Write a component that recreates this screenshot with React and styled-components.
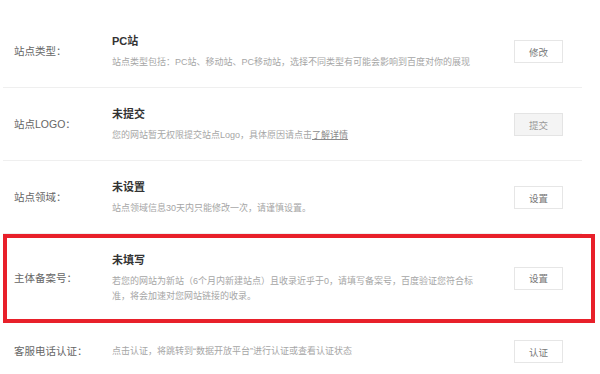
import React from "react";
import styled, { createGlobalStyle } from "styled-components";

const Global = createGlobalStyle`
  html, body { margin: 0; padding: 0; background: #fff; }
  body { font-family: "Liberation Sans", "Noto Sans CJK SC", sans-serif; }
`;

const Page = styled.div`
  width: 600px;
  height: 374px;
  overflow: hidden;
  padding: 15px 0 0 3px;
  box-sizing: border-box;
`;

const List = styled.div`
  width: 579px;
  display: flex;
  flex-direction: column;
`;

const Row = styled.div`
  position: relative;
  display: flex;
  align-items: center;
  padding: 18px 19px 17px 11px;
  border-bottom: ${(p) => (p.$last ? "none" : "1px solid #efefef")};
  ${(p) =>
    p.$highlight &&
    `
    &::after {
      content: "";
      position: absolute;
      left: 0;
      top: 0;
      right: -13px;
      bottom: -2px;
      border: 4px solid #e8202a;
      pointer-events: none;
    }
  `}
`;

const Label = styled.div`
  width: 98px;
  flex: none;
  font-size: 10.5px;
  line-height: 15px;
  color: #666;
`;

const Content = styled.div`
  flex: 1;
  display: flex;
  flex-direction: column;
`;

const Title = styled.div`
  font-size: 11px;
  line-height: 16px;
  font-weight: bold;
  color: #333;
  margin-bottom: 6px;
`;

const Desc = styled.div`
  max-width: 362px;
  font-size: 9px;
  line-height: 15px;
  color: #a6a6a6;
`;

const Link = styled.a`
  color: #8a8a8a;
  text-decoration: underline;
  cursor: pointer;
`;

const Button = styled.button`
  flex: none;
  width: 49px;
  height: 23px;
  box-sizing: border-box;
  border: 1px solid ${(p) => (p.disabled ? "#e4e4e4" : "#e6e6e6")};
  background: ${(p) => (p.disabled ? "#f4f4f4" : "#fff")};
  color: ${(p) => (p.disabled ? "#999" : "#777")};
  font-family: inherit;
  font-size: 9.5px;
  padding: 0;
  cursor: pointer;
`;

const rows = [
  {
    label: "站点类型：",
    title: "PC站",
    desc: "站点类型包括：PC站、移动站、PC移动站，选择不同类型有可能会影响到百度对你的展现",
    button: "修改",
  },
  {
    label: "站点LOGO：",
    title: "未提交",
    desc: (
      <>
        您的网站暂无权限提交站点Logo，具体原因请点击<Link>了解详情</Link>
      </>
    ),
    button: "提交",
    disabled: true,
  },
  {
    label: "站点领域：",
    title: "未设置",
    desc: "站点领域信息30天内只能修改一次，请谨慎设置。",
    button: "设置",
  },
  {
    label: "主体备案号：",
    title: "未填写",
    desc: "若您的网站为新站（6个月内新建站点）且收录近乎于0，请填写备案号，百度验证您符合标准，将会加速对您网站链接的收录。",
    button: "设置",
    highlight: true,
  },
  {
    label: "客服电话认证：",
    desc: "点击认证，将跳转到“数据开放平台”进行认证或查看认证状态",
    button: "认证",
    last: true,
  },
];

export default function App() {
  return (
    <>
      <Global />
      <Page>
        <List>
          {rows.map((r, i) => (
            <Row key={i} $highlight={r.highlight} $last={r.last}>
              <Label>{r.label}</Label>
              <Content>
                {r.title && <Title>{r.title}</Title>}
                <Desc>{r.desc}</Desc>
              </Content>
              <Button disabled={r.disabled}>{r.button}</Button>
            </Row>
          ))}
        </List>
      </Page>
    </>
  );
}
